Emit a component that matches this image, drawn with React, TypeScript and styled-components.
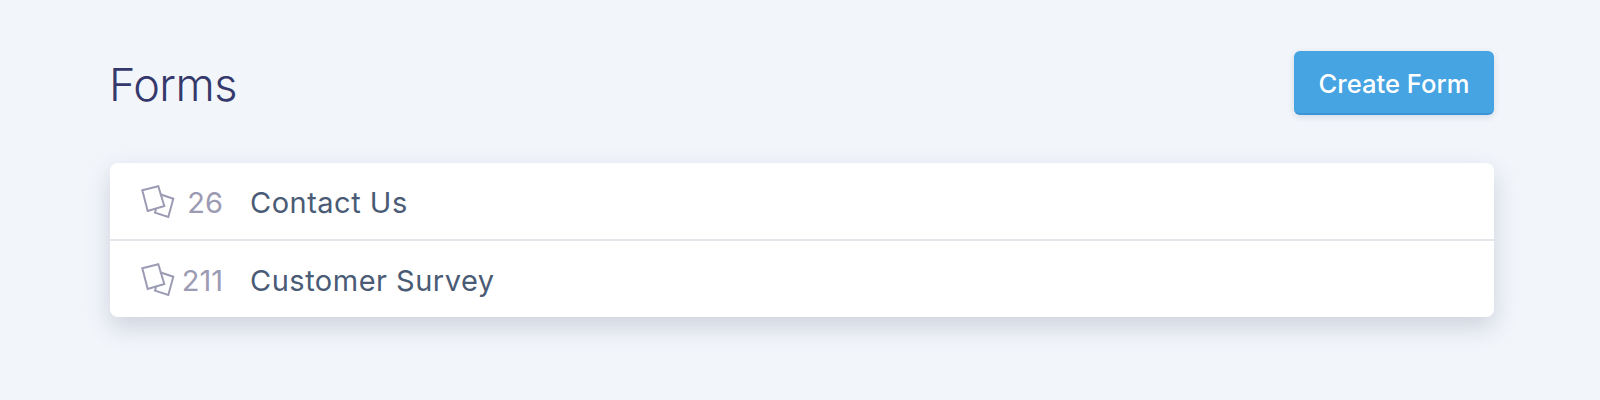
import styled, { createGlobalStyle } from "styled-components";

const GlobalStyle = createGlobalStyle`
  html, body {
    margin: 0;
    background: #f2f5fa;
    font-family: Inter, "Noto Sans", sans-serif;
  }
`;

const Page = styled.div`
  display: flex;
  flex-direction: column;
  height: 400px;
  box-sizing: border-box;
  padding: 51px 106px 0 110px;
`;

const Header = styled.div`
  display: flex;
  align-items: center;
  justify-content: space-between;
  height: 64px;
  margin-bottom: 48px;
`;

const Title = styled.h1`
  margin: 3px 0 0 -1px;
  color: #35386b;
  font-size: 45px;
  font-weight: 300;
  letter-spacing: -0.5px;
`;

const CreateButton = styled.button`
  width: 200px;
  height: 64px;
  box-sizing: border-box;
  padding: 2px 0 0;
  border: 0;
  border-bottom: 2px solid #3a94d8;
  border-radius: 6px;
  background: #47a4e2;
  box-shadow: 0 2px 6px rgba(50, 70, 110, 0.15);
  color: #fff;
  font-family: inherit;
  font-size: 25.6px;
  font-weight: 500;
`;

const Card = styled.div`
  background: #fff;
  border-radius: 8px;
  box-shadow: 0 10px 24px rgba(60, 75, 110, 0.2);
`;

const Row = styled.div`
  display: flex;
  align-items: center;
  height: 76px;
  padding: 2px 0 0 31px;
  box-sizing: border-box;

  & + & {
    height: 78px;
    border-top: 2px solid #e2e5ea;
  }
`;

const Count = styled.div`
  display: flex;
  align-items: center;
  justify-content: space-between;
  width: 82px;
  margin-right: 27px;
  color: #9c9bb4;
  font-size: 29px;
`;

const Name = styled.div`
  color: #4a5b75;
  font-size: 29px;
  letter-spacing: 0.5px;
`;

const FormsIcon = () => (
  <svg width="34" height="34" viewBox="0 0 34 34" fill="none" stroke="#9c9bb4" strokeWidth="2">
    <path d="M1.3 5.3 17.3 1.3 23.3 21 6.7 26Z" />
    <path d="M19 9.3 32.3 13.7 27.3 32 14 27.7 15 24" />
  </svg>
);

const forms = [
  { count: 26, name: "Contact Us" },
  { count: 211, name: "Customer Survey" },
];

const App = () => {
  return (
    <Page>
      <GlobalStyle />
      <Header>
        <Title>Forms</Title>
        <CreateButton>Create Form</CreateButton>
      </Header>
      <Card>
        {forms.map((form) => (
          <Row key={form.name}>
            <Count>
              <FormsIcon />
              <span>{form.count}</span>
            </Count>
            <Name>{form.name}</Name>
          </Row>
        ))}
      </Card>
    </Page>
  );
};

export default App;
